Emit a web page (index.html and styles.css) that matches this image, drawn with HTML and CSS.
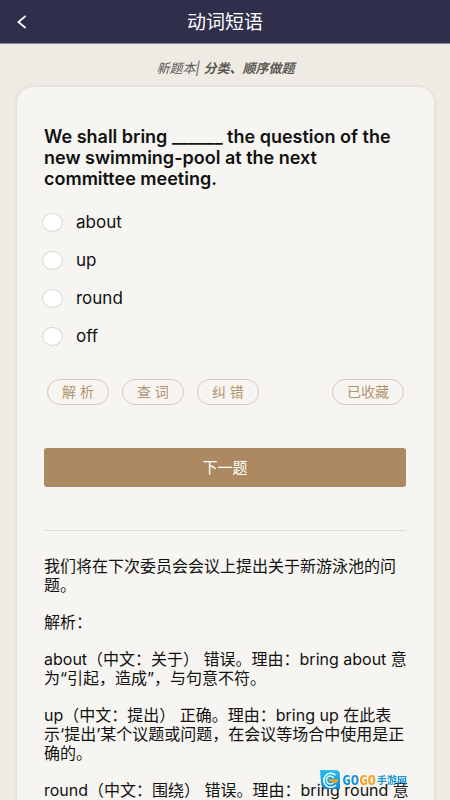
FILE: index.html
```html
<!DOCTYPE html>
<html lang="zh-CN">
<head>
<meta charset="utf-8">
<meta name="viewport" content="width=device-width, initial-scale=1">
<title>动词短语</title>
<link rel="stylesheet" href="styles.css">
</head>
<body>
<header class="topbar">
  <button class="back" type="button" aria-label="返回">
    <svg width="10" height="14" viewBox="0 0 10 14" aria-hidden="true"><path d="M8.6 1 1.4 7l7.2 6" fill="none" stroke="currentColor" stroke-width="1.7"/></svg>
  </button>
  <h1 class="title">动词短语</h1>
</header>
<main class="page">
  <p class="mode">新题本| <b>分类、顺序做题</b></p>
  <section class="card">
    <form class="quiz">
      <fieldset class="choices">
        <legend class="question">We shall bring ______ the question of the new swimming-pool at the next committee meeting.</legend>
        <label class="choice"><input type="radio" name="answer" value="about">about</label>
        <label class="choice"><input type="radio" name="answer" value="up">up</label>
        <label class="choice"><input type="radio" name="answer" value="round">round</label>
        <label class="choice"><input type="radio" name="answer" value="off">off</label>
      </fieldset>
      <div class="tools">
        <button class="pill" type="button">解 析</button>
        <button class="pill" type="button">查 词</button>
        <button class="pill" type="button">纠 错</button>
        <button class="pill saved" type="button">已收藏</button>
      </div>
      <button class="next" type="button">下一题</button>
    </form>
    <hr class="rule">
    <div class="analysis">
      <p>我们将在下次委员会会议上提出关于新游泳池的问题。</p>
      <p>解析：</p>
      <p>about（中文：关于） 错误。理由：bring about 意为“引起，造成”，与句意不符。</p>
      <p>up（中文：提出） 正确。理由：bring up 在此表示‘提出’某个议题或问题，在会议等场合中使用是正确的。</p>
      <p class="clipped">round（中文：围绕） 错误。理由：bring round 意</p>
    </div>
  </section>
</main>
<div class="watermark">
  <svg width="21" height="20" viewBox="0 0 21 20" aria-hidden="true">
    <defs><linearGradient id="blue" x1="0" y1="0" x2="0" y2="1"><stop offset="0" stop-color="#27c1f0"/><stop offset="1" stop-color="#1286d0"/></linearGradient></defs>
    <path d="M0 0h15q5 0 5 5v14H6q-5-1-5-6z" fill="url(#blue)"/>
    <path d="M15.5 5.2A7 7 0 1 0 16 15" fill="none" stroke="#fff" stroke-width="1.5"/>
    <path d="M13.5 12.6a4 4 0 1 1 .3-4.6" fill="none" stroke="#d9f5ff" stroke-width="1.5"/>
    <path d="M9 9.3h9q0 4-4 4.2l-1.2-2H9z" fill="#f6a01c"/>
  </svg>
  <span class="brand"><span class="go">GO</span><span class="go warm">GO</span></span>
  <span class="site">手游网</span>
</div>
</body>
</html>
```
FILE: styles.css
```css
* {
  box-sizing: border-box;
}

body {
  margin: 0;
  min-height: 100vh;
  display: flex;
  flex-direction: column;
  background: #eeebe5;
  color: #111;
  font: 16px/19px Inter, "Noto Sans CJK SC", sans-serif;
}

p,
h1 {
  margin: 0;
}

button {
  font: inherit;
  cursor: pointer;
}

.topbar {
  display: grid;
  grid-template-columns: 44px 1fr 44px;
  align-items: center;
  height: 44px;
  background: #2f2f4b;
  border-bottom: 1px solid #8a8794;
  color: #fff;
}

.back {
  display: flex;
  align-items: center;
  height: 43px;
  padding: 0 17px;
  border: 0;
  background: none;
  color: inherit;
}

.title {
  padding-top: 2px;
  font-size: 19px;
  line-height: 28px;
  font-weight: 400;
  text-align: center;
}

.page {
  flex: 1;
  display: flex;
  flex-direction: column;
  padding: 14px 16px 0 17px;
}

.mode {
  margin-bottom: 9px;
  color: #5c5954;
  font-size: 13px;
  line-height: 20px;
  font-style: italic;
  text-align: center;
}

.card {
  flex: 1;
  padding: 39px 28px 0 27px;
  border-radius: 16px 16px 0 0;
  background: #f7f5f1;
  box-shadow: 0 0 4px #d9d3ca;
}

.choices {
  display: flex;
  flex-direction: column;
  gap: 18px;
  margin: 0;
  padding: 0;
  border: 0;
}

.question {
  margin-bottom: 23px;
  padding: 0;
  font-size: 18px;
  line-height: 21px;
  font-weight: 600;
}

.choice {
  display: flex;
  align-items: center;
  gap: 13px;
  margin-left: -2px;
  font-size: 17px;
  line-height: 20px;
}

.choice input {
  appearance: none;
  width: 21px;
  height: 19px;
  margin: 0;
  border: 1px solid #d9d7d3;
  border-radius: 50%;
  background: #fff;
}

.choice input:checked {
  border: 6px solid #ac8961;
}

.tools {
  display: flex;
  gap: 13px;
  margin-top: 33px;
  padding: 0 2px 0 3px;
}

.pill {
  height: 26px;
  padding: 0 14px;
  border: 1px solid #d8c9b4;
  border-radius: 13px;
  background: none;
  color: #b39470;
  font-size: 14px;
  line-height: 24px;
}

.saved {
  margin-left: auto;
}

.next {
  display: block;
  width: 100%;
  height: 39px;
  margin-top: 43px;
  border: 0;
  border-radius: 3px;
  background: #ac8961;
  color: #fff;
  font-size: 15px;
}

.rule {
  height: 1px;
  margin: 43px 0 26px;
  border: 0;
  background: #dfddd9;
}

.analysis {
  display: flex;
  flex-direction: column;
  gap: 18px;
}

.analysis p {
  margin-right: -2px;
}

.clipped {
  white-space: nowrap;
}

.watermark {
  position: fixed;
  right: 43px;
  bottom: 10px;
  display: flex;
  align-items: center;
  gap: 1px;
}

.brand {
  font: bold 14px/20px "DejaVu Sans Mono", monospace;
}

.go {
  color: #1496dc;
}

.warm {
  color: #f9a11b;
}

.site {
  color: #1c94d8;
  font-size: 10px;
  font-weight: 700;
}
```
